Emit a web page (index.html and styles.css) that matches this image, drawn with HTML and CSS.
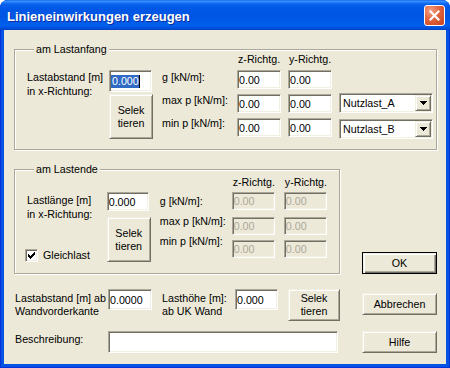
FILE: index.html
```html
<!DOCTYPE html>
<html lang="de">
<head>
    <meta charset="UTF-8">
    <meta name="viewport" content="width=device-width, initial-scale=1.0">
    <title>Linieneinwirkungen erzeugen</title>
    <link rel="stylesheet" href="styles.css">
</head>
<body>

<div class="window">
    <div class="titlebar">
        <span class="title">Linieneinwirkungen erzeugen</span>
        <button class="close" aria-label="Schließen">
            <svg width="11" height="11" viewBox="0 0 11 11"><path d="M1.5 1.5l8 8M9.5 1.5l-8 8" stroke="#fff" stroke-width="2.2" stroke-linecap="square"/></svg>
        </button>
    </div>

    <div class="client">
        <fieldset class="group start">
            <legend>am Lastanfang</legend>
            <div class="cols">
                <div class="lbl-col">Lastabstand [m]<br>in x-Richtung:</div>
                <div class="pick-col">
                    <div class="edit sel-edit"><span class="sel">0.000</span></div>
                    <button class="btn pick">Selek<br>tieren</button>
                </div>
                <div class="load-labels">
                    <span>g [kN/m]:</span>
                    <span>max p [kN/m]:</span>
                    <span>min p [kN/m]:</span>
                </div>
                <div class="dir">
                    <span class="head">z-Richtg.</span>
                    <input class="edit" value="0.00">
                    <input class="edit" value="0.00">
                    <input class="edit" value="0.00">
                </div>
                <div class="dir">
                    <span class="head">y-Richtg.</span>
                    <input class="edit" value="0.00">
                    <input class="edit" value="0.00">
                    <input class="edit" value="0.00">
                </div>
                <div class="combos">
                    <div class="combo">
                        <span class="combo-text">Nutzlast_A</span>
                        <span class="drop"><svg width="7" height="4" viewBox="0 0 7 4" shape-rendering="crispEdges"><path d="M0 0H7V1H6V2H5V3H4V4H3V3H2V2H1V1H0Z"/></svg></span>
                    </div>
                    <div class="combo">
                        <span class="combo-text">Nutzlast_B</span>
                        <span class="drop"><svg width="7" height="4" viewBox="0 0 7 4" shape-rendering="crispEdges"><path d="M0 0H7V1H6V2H5V3H4V4H3V3H2V2H1V1H0Z"/></svg></span>
                    </div>
                </div>
            </div>
        </fieldset>

        <div class="mid">
            <fieldset class="group end">
                <legend>am Lastende</legend>
                <div class="cols">
                    <div class="lbl-col">
                        <span>Lastlänge [m]<br>in x-Richtung:</span>
                        <label class="checkrow">
                            <span class="check"><svg width="7" height="7" viewBox="0 0 7 7" shape-rendering="crispEdges"><path d="M0 2H1V3H2V4H3V3H4V2H5V1H6V0H7V3H6V4H5V5H4V6H3V7H2V6H1V5H0Z"/></svg></span>
                            Gleichlast
                        </label>
                    </div>
                    <div class="pick-col">
                        <input class="edit" value="0.000">
                        <button class="btn pick">Selek<br>tieren</button>
                    </div>
                    <div class="load-labels">
                        <span>g [kN/m]:</span>
                        <span>max p [kN/m]:</span>
                        <span>min p [kN/m]:</span>
                    </div>
                    <div class="dir">
                        <span class="head">z-Richtg.</span>
                        <input class="edit" value="0.00" disabled>
                        <input class="edit" value="0.00" disabled>
                        <input class="edit" value="0.00" disabled>
                    </div>
                    <div class="dir">
                        <span class="head">y-Richtg.</span>
                        <input class="edit" value="0.00" disabled>
                        <input class="edit" value="0.00" disabled>
                        <input class="edit" value="0.00" disabled>
                    </div>
                </div>
            </fieldset>
            <button class="btn default">OK</button>
        </div>

        <div class="bottom">
            <div class="pair first">Lastabstand [m] ab<br>Wandvorderkante</div>
            <input class="edit" value="0.0000">
            <div class="pair">Lasthöhe [m]:<br>ab UK Wand</div>
            <input class="edit" value="0.000">
            <button class="btn pick">Selek<br>tieren</button>
            <button class="btn side">Abbrechen</button>
            <div class="desc-label">Beschreibung:</div>
            <input class="edit desc" value="">
            <button class="btn side">Hilfe</button>
        </div>
    </div>
</div>

</body>
</html>
```

FILE: styles.css
```css
body {
    margin: 0;
    background: #fff;
    font-family: "Liberation Sans", Arial, sans-serif;
    font-size: 10.7px;
    color: #000;
}

/* window frame */

.window {
    width: 450px;
    height: 368px;
    display: flex;
    flex-direction: column;
    background: #0553e3;
    border-radius: 8px 8px 0 0;
    box-shadow: inset 0 0 0 1px #0831d9;
    overflow: hidden;
}

.titlebar {
    flex: none;
    height: 30px;
    box-sizing: border-box;
    display: flex;
    align-items: center;
    padding: 2px 5px 0 7px;
    background: linear-gradient(to bottom, #0a5fe8 0, #3d95ff 1px, #2a84fa 2px, #0a62ef 4px, #0058e6 8px, #0056e3 16px, #005be9 22px, #0060ee 25px, #0052e0 28px, #0040c0 30px);
}

.title {
    flex: 1;
    font-size: 13px;
    font-weight: bold;
    color: #fff;
    text-shadow: 1px 1px 0 #0a2a9c;
}

.close {
    align-self: flex-start;
    margin-top: 3px;
    width: 21px;
    height: 21px;
    padding: 0;
    display: flex;
    align-items: center;
    justify-content: center;
    border: 1px solid #fff;
    border-radius: 3px;
    background: radial-gradient(circle at 30% 25%, #f4a085 0, #e2643e 45%, #c7411b 100%);
}

.client {
    flex: 1;
    margin: 0 4px 4px;
    padding: 13px 9px 0 10px;
    background: #ece9d8;
}

/* classic 3d controls */

.edit {
    box-sizing: border-box;
    margin: 0;
    padding: 0 0 0 1px;
    font: inherit;
    color: #000;
    background: #fff;
    border: 1px solid;
    border-color: #aca899 #fff #fff #aca899;
    box-shadow: inset 1px 1px 0 #716f64, inset -1px -1px 0 #f1efe2;
    outline: none;
    width: 44px;
    height: 19px;
}

.edit:disabled {
    background: #ece9d8;
    color: #aca899;
}

.btn {
    box-sizing: border-box;
    margin: 0;
    padding: 0;
    font: inherit;
    line-height: 13px;
    color: #000;
    background: #ece9d8;
    border: 1px solid;
    border-color: #f1efe2 #716f64 #716f64 #f1efe2;
    box-shadow: inset 1px 1px 0 #fff, inset -1px -1px 0 #aca899;
}

.btn.default {
    border-color: #000;
    box-shadow: inset 1px 1px 0 #f1efe2, inset 2px 2px 0 #fff, inset -1px -1px 0 #716f64, inset -2px -2px 0 #aca899;
    width: 75px;
    height: 22px;
    margin-left: 22px;
}

.btn.side {
    width: 75px;
    height: 22px;
}

.pick {
    width: 44px;
    height: 45px;
}

/* group boxes */

.group {
    margin: 0;
    padding: 0 3px 10px 12px;
    min-width: 0;
    border: 1px solid #aca899;
    box-shadow: inset 1px 1px 0 #fff, 1px 1px 0 #fff;
}

.group legend {
    margin-left: 7px;
    padding: 0 2px;
    line-height: 13px;
    background: #ece9d8;
}

.cols {
    display: flex;
    align-items: flex-start;
}

.lbl-col {
    display: flex;
    flex-direction: column;
    align-items: flex-start;
    line-height: 14px;
    white-space: nowrap;
}

.pick-col,
.load-labels,
.dir,
.combos {
    display: flex;
    flex-direction: column;
    align-items: flex-start;
}

.load-labels {
    line-height: 13px;
    white-space: nowrap;
}

.head {
    line-height: 13px;
    padding-left: 1px;
}

/* am Lastanfang */

.start .lbl-col { width: 82px; margin-top: 14px; }
.start .pick-col { width: 53px; margin-top: 14px; }
.start .load-labels { width: 75px; margin-top: 15px; gap: 10px; }
.start .dir { width: 51px; }
.start .head { margin-top: -3px; }
.start .dir .edit { margin-top: 5px; }
.start .dir .edit:nth-child(2) { margin-top: 4px; }
.start .pick { margin-top: 2px; }

.sel-edit {
    width: 43px;
    height: 22px;
    display: flex;
    align-items: center;
}

.sel {
    line-height: 13px;
    padding-left: 1px;
    color: #fff;
    background: #316ac5;
    border-right: 1px solid #000;
}

.combos {
    width: 94px;
    margin-top: 37px;
    gap: 6px;
}

.combo {
    box-sizing: border-box;
    width: 94px;
    height: 20px;
    padding: 1px;
    display: flex;
    align-items: center;
    background: #fff;
    border: 1px solid;
    border-color: #aca899 #fff #fff #aca899;
    box-shadow: inset 1px 1px 0 #716f64, inset -1px -1px 0 #f1efe2;
}

.combo-text {
    flex: 1;
    padding-left: 2px;
}

.drop {
    box-sizing: border-box;
    width: 16px;
    align-self: stretch;
    display: flex;
    align-items: center;
    justify-content: center;
    background: #ece9d8;
    border: 1px solid;
    border-color: #f1efe2 #716f64 #716f64 #f1efe2;
    box-shadow: inset 1px 1px 0 #fff, inset -1px -1px 0 #aca899;
}

/* am Lastende */

.mid {
    display: flex;
    align-items: flex-end;
    margin-top: 13px;
}

.end {
    width: 326px;
    box-sizing: border-box;
    padding-bottom: 11px;
}

.end .lbl-col { width: 81px; margin-top: 17px; }
.end .pick-col { width: 54px; margin-top: 16px; }
.end .pick-col .edit { width: 42px; }
.end .pick { margin-top: 6px; }
.end .load-labels { width: 73px; margin-top: 19px; gap: 7px; }
.end .dir { width: 53px; }
.end .dir .edit { width: 43px; height: 18px; margin-top: 5px; }
.end .dir .edit:nth-child(2) { margin-top: 3px; }
.end .dir .edit:nth-child(3) { margin-top: 7px; }

.checkrow {
    display: flex;
    align-items: center;
    gap: 5px;
    margin: 27px 0 0 -2px;
}

.check {
    box-sizing: border-box;
    width: 13px;
    height: 13px;
    display: flex;
    align-items: center;
    justify-content: center;
    background: #fff;
    border: 1px solid;
    border-color: #aca899 #fff #fff #aca899;
    box-shadow: inset 1px 1px 0 #716f64, inset -1px -1px 0 #f1efe2;
}

/* bottom rows */

.bottom {
    display: grid;
    grid-template-columns: 94px 54px 73px 53px 74px 75px;
    grid-template-rows: 32px 22px;
    row-gap: 10px;
    align-items: start;
    margin-top: 15px;
}

.bottom .edit {
    height: 21px;
    width: 43px;
}

.bottom .edit:nth-child(2) {
    width: 44px;
}

.pair {
    margin-top: 3px;
    line-height: 13px;
    white-space: nowrap;
}

.pair.first,
.desc-label {
    padding-left: 1px;
}

.bottom .pick {
    width: 52px;
    height: 32px;
}

.bottom .side:nth-child(6) {
    margin-top: 4px;
}

.desc-label {
    margin-top: 2px;
    line-height: 13px;
}

.bottom .edit.desc {
    grid-column: 2 / 6;
    width: 230px;
    height: 22px;
}
```
